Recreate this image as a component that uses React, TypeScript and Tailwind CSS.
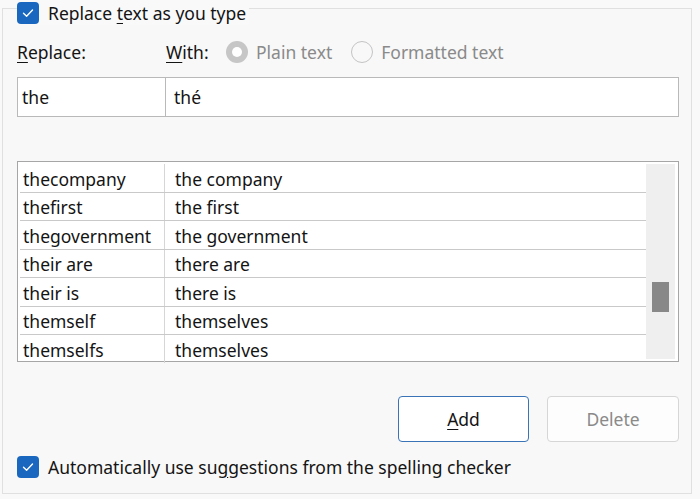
import React from 'react'

const rows = [
  ['thecompany', 'the company'],
  ['thefirst', 'the first'],
  ['thegovernment', 'the government'],
  ['their are', 'there are'],
  ['their is', 'there is'],
  ['themself', 'themselves'],
  ['themselfs', 'themselves'],
]

const CheckBox = () => (
  <span className="flex h-[22px] w-[22px] shrink-0 items-center justify-center rounded-[4px] bg-[#1a67bf]">
    <svg width="14" height="14" viewBox="0 0 14 14" fill="none">
      <polyline
        points="2.5,7.3 5.6,10.2 11.5,4"
        stroke="white"
        strokeWidth="1.4"
        strokeLinecap="round"
        strokeLinejoin="round"
      />
    </svg>
  </span>
)

const Radio = ({ checked }: { checked?: boolean }) =>
  checked ? (
    <span className="flex h-[22px] w-[22px] shrink-0 items-center justify-center rounded-full bg-[#c6c6c6]">
      <span className="h-[10px] w-[10px] rounded-full bg-white" />
    </span>
  ) : (
    <span className="h-[22px] w-[22px] shrink-0 rounded-full border border-[#c4c4c4] bg-[#f8f8f8]" />
  )

export default function App() {
  return (
    <div
      className="h-[499px] w-[700px] overflow-hidden bg-[#f9f9f9] pl-[2px] pt-[8px] text-[17.5px] text-[#141414]"
      style={{ fontFamily: '"Noto Sans", "Open Sans", sans-serif' }}
    >
      <div className="flex h-[486px] w-[690px] flex-col border border-[#e0e0e0] bg-[#f8f8f8] pb-[14px] pl-[14px] pr-[12px]">
        <div className="-mt-[8px] flex h-[24px] items-center gap-[9px] self-start bg-[#f9f9f9] pr-[3px]">
          <CheckBox />
          <span className="pt-[1px]">
            Replace <span className="underline underline-offset-[3px]">t</span>ext as you type
          </span>
        </div>

        <div className="mt-[13px] flex h-[28px] items-center">
          <span className="w-[149px]">
            <span className="underline underline-offset-[3px]">R</span>eplace:
          </span>
          <span className="w-[60px]">
            <span className="underline underline-offset-[3px]">W</span>ith:
          </span>
          <span className="flex items-center gap-[8px] text-[#8a8a8a]">
            <Radio checked />
            Plain text
          </span>
          <span className="ml-[19px] flex items-center gap-[8px] text-[#8a8a8a]">
            <Radio />
            Formatted text
          </span>
        </div>

        <div className="mt-[11px] flex h-[40px] border border-[#b9b9b9] bg-white">
          <div className="flex w-[148px] items-center border-r border-[#b9b9b9] pl-[4px]">the</div>
          <div className="flex flex-1 items-center pl-[8px]">thé</div>
        </div>

        <div className="mt-[44px] flex h-[201px] border border-[#a6a6a6] bg-white p-[1px] pr-[3px]">
          <div className="flex flex-1 flex-col pl-[1px] pt-[1px]">
            {rows.map(([from, to], i) => (
              <div
                key={i}
                className={
                  i < rows.length - 1
                    ? 'flex h-[28.5px] items-stretch border-b border-[#c9c9c9]'
                    : 'flex h-[28px] items-stretch'
                }
              >
                <span className="flex w-[145px] items-center border-r border-[#d6d6d6] pl-[3px] pt-[2px]">
                  {from}
                </span>
                <span className="flex items-center pl-[10px] pt-[2px]">{to}</span>
              </div>
            ))}
          </div>
          <div className="my-[1px] flex w-[29px] flex-col bg-[#efefef] pt-[118px]">
            <div className="mx-auto h-[30px] w-[17px] bg-[#888888]" />
          </div>
        </div>

        <div className="mt-[34px] flex justify-end gap-[18px]">
          <button className="h-[46px] w-[131px] rounded-[4px] border border-[#3a74b6] bg-white text-[#141414]">
            <span className="underline underline-offset-[3px]">A</span>dd
          </button>
          <button className="h-[46px] w-[132px] rounded-[4px] border border-[#d6d6d6] bg-[#fdfdfd] text-[#8a8a8a]">
            Delete
          </button>
        </div>

        <div className="mt-[13px] flex h-[24px] items-center gap-[9px]">
          <CheckBox />
          <span>
            Automatically use su<span className="underline underline-offset-[3px]">g</span>gestions from the spelling checker
          </span>
        </div>
      </div>
    </div>
  )
}
